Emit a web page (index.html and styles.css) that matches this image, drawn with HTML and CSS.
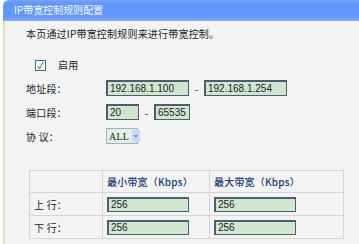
FILE: index.html
```html
<!DOCTYPE html>
<html lang="zh-CN">
<head>
    <meta charset="UTF-8">
    <title>IP带宽控制规则配置</title>
    <link rel="stylesheet" href="styles.css">
</head>
<body>

<div class="panel">
    <div class="panel-title">IP带宽控制规则配置</div>

    <div class="panel-body">
        <p class="intro">本页通过IP带宽控制规则来进行带宽控制。</p>

        <div class="row">
            <span class="label check-cell"><span class="checkbox">&#10003;</span></span>
            <span>启用</span>
        </div>
        <div class="row">
            <span class="label">地址段：</span>
            <input class="field ip" type="text" value="192.168.1.100">
            <span class="dash">-</span>
            <input class="field ip" type="text" value="192.168.1.254">
        </div>
        <div class="row">
            <span class="label">端口段：</span>
            <input class="field port" type="text" value="20">
            <span class="dash">-</span>
            <input class="field port2" type="text" value="65535">
        </div>
        <div class="row">
            <span class="label">协&nbsp;议：</span>
            <span class="select">ALL<span class="arrow">&#8964;</span></span>
        </div>

        <table class="bw">
            <tr>
                <th class="c1"></th>
                <th class="c2">最小带宽（Kbps）</th>
                <th class="c3">最大带宽（Kbps）</th>
            </tr>
            <tr>
                <td>上&nbsp;行：</td>
                <td><input class="field bwin" type="text" value="256"></td>
                <td><input class="field bwin" type="text" value="256"></td>
            </tr>
            <tr>
                <td>下&nbsp;行：</td>
                <td><input class="field bwin" type="text" value="256"></td>
                <td><input class="field bwin" type="text" value="256"></td>
            </tr>
        </table>
    </div>
</div>

</body>
</html>
```

FILE: styles.css
```css
body {
    margin: 0;
    background-color: #ffffff;
    font-family: "Noto Sans CJK SC", "DejaVu Sans", sans-serif;
    font-size: 10px;
    letter-spacing: 0.2px;
    color: #222;
}
.panel {
    margin-left: 3px;
    height: 244px;
    background-color: #f3f3f3;
}
.panel-title {
    height: 21px;
    line-height: 20px;
    padding-left: 11px;
    color: #f4f7ff;
    font-size: 10px;
    letter-spacing: 0;
    background: linear-gradient(#7aa6f4 0, #6497fb 3px, #6397fa 17px, #8aaee8 21px);
    border-top-left-radius: 6px;
}
.panel-body {
    border-left: 2px solid #e9dcac;
    padding-left: 21px;
    height: 223px;
}
.intro {
    margin: 0;
    padding-top: 5px;
    height: 26px;
    line-height: 16px;
}
.row {
    display: flex;
    align-items: center;
    height: 24px;
}
.label {
    width: 80px;
    flex-shrink: 0;
}
.check-cell {
    width: 32px;
    padding-left: 9px;
    box-sizing: border-box;
}
.checkbox {
    display: inline-block;
    width: 9px;
    height: 9px;
    border: 1px solid #3c6e9c;
    background-color: #ffffff;
    color: #2f9a2f;
    font-size: 9px;
    line-height: 9px;
    text-align: center;
    font-weight: bold;
}
.field {
    box-sizing: border-box;
    height: 16px;
    border: 1px solid #4e5d6c;
    border-top-width: 2px;
    border-left-width: 2px;
    background-color: #cfe7cf;
    font-family: "Liberation Sans", sans-serif;
    font-size: 10px;
    padding: 0 2px;
    color: #222;
}
.ip {
    width: 83px;
}
.port {
    width: 33px;
}
.port2 {
    width: 36px;
}
.dash {
    width: 15px;
    text-align: center;
}
.select {
    display: flex;
    align-items: center;
    box-sizing: border-box;
    width: 32px;
    height: 16px;
    border: 1px solid #9fb0c0;
    background-color: #e2f0e2;
    font-family: "Liberation Serif", serif;
    font-size: 10px;
    padding-left: 2px;
}
.arrow {
    margin-left: 3px;
    width: 11px;
    height: 12px;
    background-color: #c8d8f4;
    color: #2d56b0;
    font-size: 9px;
    line-height: 8px;
    text-align: center;
}
.bw {
    margin-top: 22px;
    margin-left: 3px;
    width: 315px;
    border-collapse: collapse;
    border: 1px solid #c9c9c9;
}
.bw th, .bw td {
    border: 1px solid #d4d4d4;
    text-align: left;
    padding: 0 0 0 4px;
}
.bw th {
    height: 21px;
    font-weight: 500;
    color: #213c7a;
}
.bw td {
    height: 22px;
}
.c1 {
    width: 68px;
}
.c2 {
    width: 102px;
}
.bwin {
    width: 82px;
    height: 15px;
}
```
